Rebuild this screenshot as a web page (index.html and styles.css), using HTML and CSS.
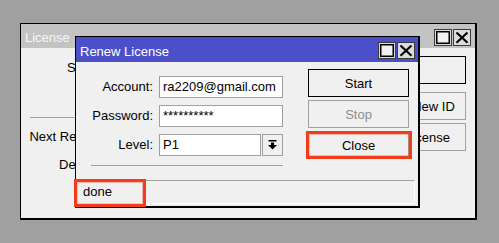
FILE: index.html
```html
<!DOCTYPE html>
<html>
<head>
<meta charset="utf-8">
<title>Renew License</title>
<link rel="stylesheet" href="styles.css">
</head>
<body>
<div class="win outer">
  <div class="titlebar">
    <span class="title">License</span>
    <span class="tbtns">
      <span class="tbtn"><svg width="16" height="15" viewBox="0 0 16 15"><rect x="1.75" y="1.75" width="12.5" height="11.5" fill="#f0f0f0" stroke="#000" stroke-width="1.5"/></svg></span>
      <span class="tbtn"><svg width="16" height="15" viewBox="0 0 16 15"><path d="M2.5 2.5 L13.5 12.8 M13.5 2.5 L2.5 12.8" stroke="#000" stroke-width="2.2" fill="none"/></svg></span>
    </span>
  </div>
  <div class="obody">
    <div class="oleft">
      <div class="orow first">System:</div>
      <div class="osep"></div>
      <div class="orow">Next Renewal:</div>
      <div class="orow">Deadline:</div>
    </div>
    <div class="oright">
      <div class="btn default ok">OK</div>
      <div class="btn newid">New ID</div>
      <div class="btn renew">License</div>
    </div>
  </div>
</div>

<div class="win inner">
  <div class="titlebar">
    <span class="title">Renew License</span>
    <span class="tbtns">
      <span class="tbtn"><svg width="16" height="15" viewBox="0 0 16 15"><rect x="1.75" y="1.75" width="12.5" height="11.5" fill="#f0f0f0" stroke="#000" stroke-width="1.5"/></svg></span>
      <span class="tbtn"><svg width="16" height="15" viewBox="0 0 16 15"><path d="M2.5 2.5 L13.5 12.8 M13.5 2.5 L2.5 12.8" stroke="#000" stroke-width="2.2" fill="none"/></svg></span>
    </span>
  </div>
  <div class="ibody">
    <div class="imain">
      <div class="form">
        <div class="grid">
          <div class="lbl">Account:</div>
          <div class="field">ra2209@gmail.com</div>
          <div class="lbl">Password:</div>
          <div class="field">**********</div>
          <div class="lbl">Level:</div>
          <div class="combo">
            <div class="field">P1</div>
            <div class="dd"><svg width="9" height="10" viewBox="0 0 9 10"><rect x="0.5" y="0" width="8" height="1.5" fill="#000"/><rect x="3" y="2.5" width="3" height="3" fill="#000"/><polygon points="0,5 9,5 4.5,9.5" fill="#000"/></svg></div>
          </div>
        </div>
        <div class="isep"></div>
      </div>
      <div class="actions">
        <div class="btn default">Start</div>
        <div class="btn disabled">Stop</div>
        <div class="btn">Close</div>
      </div>
    </div>
    <div class="status">done</div>
  </div>
</div>

<div class="mark mark-close"></div>
<div class="mark mark-done"></div>
</body>
</html>
```

FILE: styles.css
```css
* { box-sizing: border-box; margin: 0; padding: 0; }
html, body { width: 499px; height: 243px; overflow: hidden; }
body {
  background: #a0a0a0;
  font: 13px "Liberation Sans", Arial, sans-serif;
  color: #000;
  position: relative;
}

.win {
  position: absolute;
  background: #f0f0f0;
  border: 1px solid #000;
  border-right-width: 2px;
  border-bottom-width: 2px;
  display: flex;
  flex-direction: column;
}
.outer { left: 20px; top: 23px; width: 457px; height: 197px; }
.inner { left: 75px; top: 36px; width: 345px; height: 172px; }

.titlebar { display: flex; align-items: flex-start; flex: none; }
.outer .titlebar { height: 24px; background: #c3c3c3; color: #f7f7f7; }
.inner .titlebar { height: 25px; background: #4b50c8; color: #fff; }
.title { flex: 1; padding-left: 4px; padding-top: 4px; white-space: nowrap; }
.outer .title { line-height: 20px; }
.inner .title { line-height: 21px; }
.tbtns { display: flex; gap: 1px; margin-top: 5px; margin-right: 3px; }
.outer .tbtns { margin-right: 4px; }
.tbtn {
  width: 18px; height: 17px;
  border: 1px solid #3a3a3a;
  background: #dcdcdc;
  display: flex;
}
.tbtn svg { display: block; }

/* outer window body */
.obody { flex: 1; display: flex; justify-content: space-between; padding-right: 9px; }
.oleft { width: 93px; padding-top: 6px; text-align: right; }
.orow { height: 28px; line-height: 28px; white-space: nowrap; }
.orow.first { margin-bottom: 35px; }
.osep { height: 1px; background: #a0a0a0; margin-left: 9px; width: 200px; margin-bottom: 5px; }
.oright { display: flex; flex-direction: column; align-items: flex-end; padding-top: 8px; }
.ok { width: 121px; height: 28px; margin-bottom: 8px; }
.newid { width: 65px; height: 28px; margin-bottom: 3px; }
.renew { width: 77px; height: 28px; }

.btn {
  display: flex; align-items: center; justify-content: center;
  border: 1px solid #a0a0a0;
  background: #f0f0f0;
  white-space: nowrap;
}
.btn.default { border-color: #000; }
.btn.disabled { color: #8d8d8d; }

/* inner dialog body */
.ibody { flex: 1; display: flex; flex-direction: column; }
.imain { display: flex; align-items: flex-start; }
.form { margin-top: 14px; flex: none; }
.grid {
  display: grid;
  grid-template-columns: 77px 124px;
  column-gap: 6px;
  row-gap: 7px;
  grid-auto-rows: 22px;
}
.lbl { text-align: right; line-height: 22px; white-space: nowrap; }
.field {
  background: #fff;
  border: 1px solid #a0a0a0;
  line-height: 20px;
  padding-left: 3px;
  white-space: nowrap;
  overflow: hidden;
}
.combo { display: flex; gap: 1px; }
.combo .field { width: 102px; }
.dd {
  width: 21px; height: 22px;
  border: 1px solid #a0a0a0;
  background: #f0f0f0;
  display: flex; align-items: center; justify-content: center;
}
.dd svg { display: block; }
.isep { height: 1px; background: #a0a0a0; margin: 9px 0 0 15px; width: 192px; }
.actions { display: flex; flex-direction: column; gap: 3px; margin: 7px 0 0 25px; }
.actions .btn { width: 101px; height: 28px; }
.status {
  margin-top: 14px;
  height: 24px;
  width: 339px;
  border: 1px solid;
  border-color: #a0a0a0 #fff #fff #a0a0a0;
  line-height: 22px;
  padding-left: 6px;
}

/* annotation boxes */
.mark {
  position: absolute;
  border: 3px solid #f23d1b;
  box-shadow: inset 0 0 0 1px rgba(242, 61, 27, 0.3);
}
.mark-close { left: 306px; top: 131px; width: 106px; height: 28px; }
.mark-done { left: 74px; top: 179px; width: 72px; height: 28px; }
```
